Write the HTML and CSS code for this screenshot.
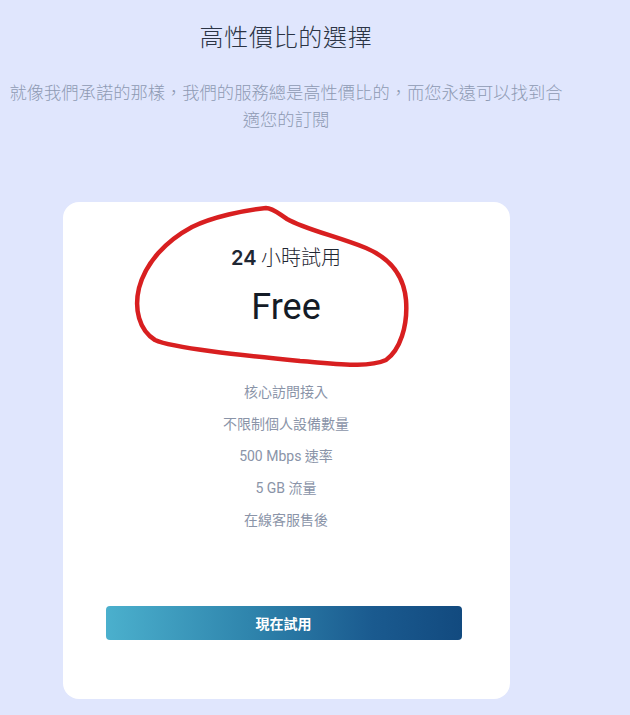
FILE: index.html
```html
<!DOCTYPE html>
<html lang="zh-Hant">
<head>
<meta charset="utf-8">
<title>高性價比的選擇</title>
<link rel="stylesheet" href="styles.css">
</head>
<body>
<div class="page">
  <section class="pricing">
    <h1 class="title">高性價比的選擇</h1>
    <p class="subtitle">就像我們承諾的那樣，我們的服務總是高性價比的，而您永遠可以找到合適您的訂閱</p>
    <div class="card">
      <div class="plan-name"><span class="num">24</span> 小時試用</div>
      <div class="price">Free</div>
      <ul class="features">
        <li>核心訪問接入</li>
        <li>不限制個人設備數量</li>
        <li>500 Mbps 速率</li>
        <li>5 GB 流量</li>
        <li>在線客服售後</li>
      </ul>
      <a class="btn" href="#">現在試用</a>
    </div>
  </section>
  <svg class="annotation" width="630" height="715" viewBox="0 0 630 715" aria-hidden="true">
    <path d="M266,208 C245,210 212,217 192,227 C166,241 146,262 139,288 C134,309 139,330 155,340 C172,348 240,355 300,361 C340,364 368,368 386,360 C400,350 408,326 406,300 C404,278 392,259 366,248 C336,236 304,229 287,219 C279,214 273,208 266,208 Z" fill="none" stroke="#d81f20" stroke-width="4.5" stroke-linejoin="round" stroke-linecap="round"/>
  </svg>
</div>
</body>
</html>
```
FILE: styles.css
```css
html, body {
  margin: 0;
  padding: 0;
  background: #e0e6fd;
}
body {
  width: 630px;
  height: 715px;
  overflow: hidden;
  font-family: Inter, "Noto Sans CJK TC", sans-serif;
}
.page {
  position: relative;
  width: 630px;
  height: 715px;
}
.pricing {
  width: 572px;
  display: flex;
  flex-direction: column;
  align-items: center;
  text-align: center;
  padding-top: 20px;
}
.title {
  margin: 0;
  font-family: "Noto Sans CJK TC", sans-serif;
  font-weight: 300;
  font-size: 24px;
  line-height: 32px;
  color: #2b3445;
  letter-spacing: 0.7px;
}
.subtitle {
  margin: 26px 0 0;
  width: 558px;
  font-family: "Noto Sans CJK TC", sans-serif;
  font-weight: 300;
  font-size: 17.3px;
  line-height: 27px;
  color: #8e9ab3;
}
.card {
  margin-top: 70px;
  width: 447px;
  height: 497px;
  box-sizing: border-box;
  background: #ffffff;
  border-radius: 16px;
  padding: 41px 48px 0 43px;
  display: flex;
  flex-direction: column;
  align-items: stretch;
}
.plan-name {
  font-family: "Noto Sans CJK TC", sans-serif;
  font-size: 20px;
  line-height: 28px;
  color: #1f2733;
  font-weight: 300;
  padding-left: 5px;
}
.plan-name .num {
  font-family: Inter, sans-serif;
  font-weight: 600;
}
.price {
  margin-top: 13px;
  font-family: Roboto, sans-serif;
  font-size: 36px;
  line-height: 44px;
  color: #141b26;
  padding-left: 5px;
}
.features {
  list-style: none;
  margin: 47px 0 0;
  padding: 0 0 0 5px;
  font-family: Roboto, "Noto Sans CJK TC", sans-serif;
  font-size: 14px;
  line-height: 32px;
  color: #8a94a8;
}
.btn {
  margin-top: 70px;
  height: 34px;
  border-radius: 4px;
  background: linear-gradient(90deg, #4bb0cd 0%, #2f85ad 40%, #1a5a8f 75%, #124a7f 100%);
  color: #ffffff;
  font-family: "Noto Sans CJK TC", sans-serif;
  font-weight: 700;
  font-size: 14px;
  line-height: 34px;
  text-decoration: none;
  text-align: center;
}
.annotation {
  position: absolute;
  left: 0;
  top: 0;
  pointer-events: none;
}
```
